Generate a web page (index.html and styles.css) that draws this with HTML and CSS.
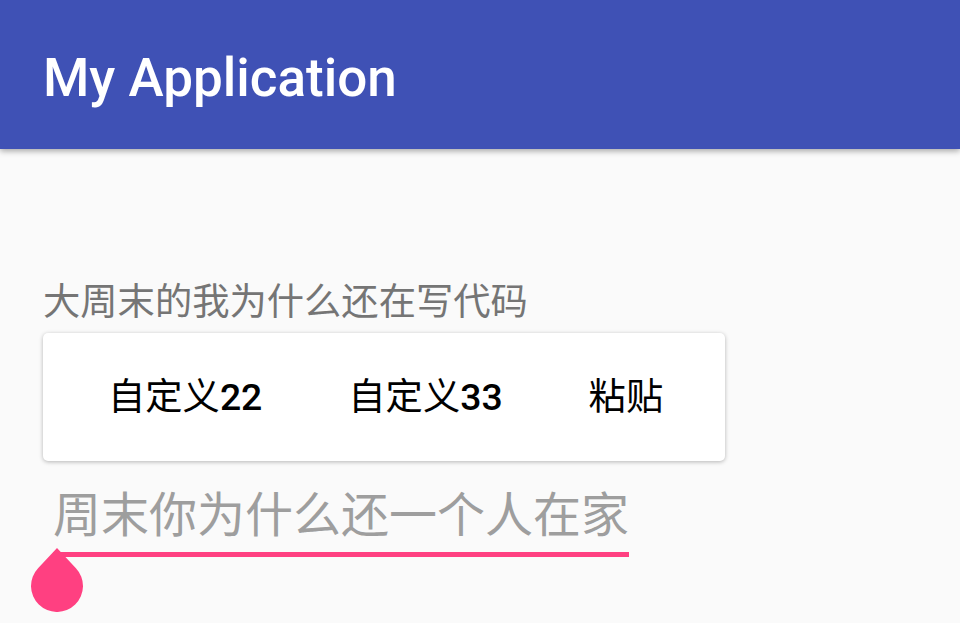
FILE: index.html
```html
<!DOCTYPE html>
<html lang="zh-CN">
<head>
<meta charset="utf-8">
<title>My Application</title>
<link rel="stylesheet" href="styles.css">
</head>
<body>
<header class="appbar">
  <h1 class="title">My Application</h1>
</header>
<main class="content">
  <p class="label">大周末的我为什么还在写代码</p>
  <div class="toolbar">
    <span class="item item-first">自定义<b class="num">22</b></span>
    <span class="item">自定义<b class="num">33</b></span>
    <span class="item item-last">粘贴</span>
  </div>
  <div class="edit">
    <span class="edit-text">周末你为什么还一个人在家</span>
    <svg class="handle" width="52" height="64" viewBox="0 0 52 64" aria-hidden="true">
      <path d="M26 0 L44.95 20.21 A26 26 0 1 1 7.05 20.21 Z" fill="#FF4081"/>
    </svg>
  </div>
</main>
</body>
</html>
```
FILE: styles.css
```css
html, body {
  margin: 0;
  padding: 0;
}
body {
  background: #FAFAFA;
  font-family: Roboto, "Noto Sans CJK SC", sans-serif;
  width: 960px;
  height: 623px;
  overflow: hidden;
}
.appbar {
  box-sizing: border-box;
  height: 149px;
  background: #3F51B5;
  padding: 47px 0 0 43px;
  box-shadow: 0 2px 6px rgba(0, 0, 0, 0.35);
  position: relative;
  z-index: 1;
}
.title {
  margin: 0;
  font-size: 53px;
  line-height: 62px;
  font-weight: 500;
  color: #FFFFFF;
}
.content {
  padding: 0 43px;
}
.label {
  margin: 131px 0 0 0;
  font-size: 37.3px;
  line-height: 44px;
  color: #757575;
}
.toolbar {
  margin-top: 9px;
  width: 682px;
  height: 128px;
  box-sizing: border-box;
  background: #FFFFFF;
  border-radius: 5px;
  box-shadow: 0 1px 4px rgba(0, 0, 0, 0.28);
  display: flex;
  align-items: center;
  padding: 0 21px;
}
.item {
  font-size: 37.3px;
  line-height: 44px;
  font-weight: 400;
  color: #000000;
  padding: 0 43px;
  white-space: nowrap;
}
.num {
  font-weight: 500;
}
.item-first {
  padding-left: 44px;
}
.edit {
  position: relative;
  margin-top: 27px;
  display: inline-block;
  padding: 0 0 2px 10px;
}
.edit-text {
  display: block;
  font-size: 48px;
  line-height: 56px;
  color: #9E9E9E;
  border-bottom: 5px solid #FF4081;
  padding-bottom: 8px;
}
.handle {
  position: absolute;
  left: -12px;
  top: 60px;
}
```
